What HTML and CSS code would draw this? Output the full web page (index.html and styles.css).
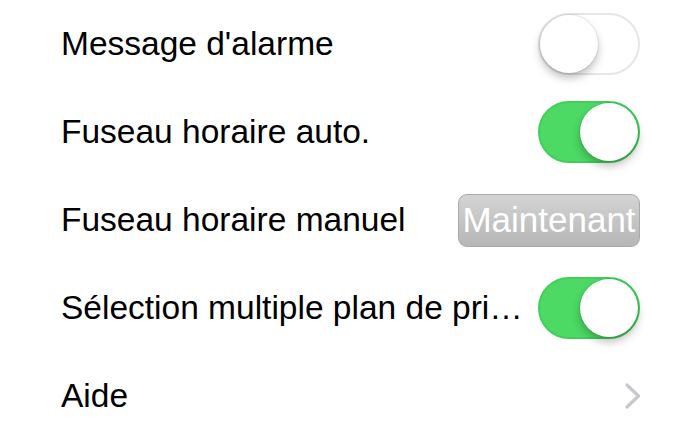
FILE: index.html
```html
<!DOCTYPE html>
<html lang="fr">
<head>
<meta charset="utf-8">
<link rel="stylesheet" href="styles.css">
</head>
<body>
<div class="list">
  <div class="row">
    <span class="label">Message d'alarme</span>
    <span class="toggle"><span class="knob"></span></span>
  </div>
  <div class="row">
    <span class="label">Fuseau horaire auto.</span>
    <span class="toggle on"><span class="knob"></span></span>
  </div>
  <div class="row">
    <span class="label">Fuseau horaire manuel</span>
    <span class="button">Maintenant</span>
  </div>
  <div class="row">
    <span class="label">Sélection multiple plan de pri…</span>
    <span class="toggle on"><span class="knob"></span></span>
  </div>
  <div class="row">
    <span class="label">Aide</span>
    <svg class="chevron" width="16" height="26" viewBox="0 0 16 26"><polyline points="2,2 13.5,13 2,24" fill="none" stroke="#c7c7cc" stroke-width="3.2" stroke-linecap="round" stroke-linejoin="round"/></svg>
  </div>
</div>
</body>
</html>
```
FILE: styles.css
```css
html, body {
  margin: 0;
  padding: 0;
  background: #fff;
}
body {
  font-family: "Liberation Sans", Arial, Helvetica, sans-serif;
  color: #000;
}
.list {
  display: flex;
  flex-direction: column;
}
.row {
  height: 88px;
  display: flex;
  align-items: center;
  justify-content: space-between;
  gap: 14px;
  padding: 0 60px 0 61px;
}
.label {
  font-size: 33.5px;
  white-space: nowrap;
  overflow: hidden;
  text-overflow: ellipsis;
  min-width: 0;
}
.toggle {
  flex: none;
  position: relative;
  width: 102px;
  height: 62px;
  box-sizing: border-box;
  border-radius: 31px;
  border: 2px solid #e6e6e6;
  background: #fff;
}
.toggle .knob {
  position: absolute;
  top: 0;
  left: 0;
  width: 58px;
  height: 58px;
  border-radius: 50%;
  background: #fff;
  box-shadow: 0 0 0 1px rgba(0,0,0,0.06), 0 5px 8px rgba(0,0,0,0.25);
}
.toggle.on {
  background: #4cd964;
  border-color: #40cf59;
}
.toggle.on .knob {
  left: 40px;
  box-shadow: 0 0 0 1px rgba(0,0,0,0.06), 0 5px 8px rgba(0,0,0,0.25);
}
.button {
  flex: none;
  width: 182px;
  height: 53px;
  box-sizing: border-box;
  border: 1px solid #a9a9a9;
  border-radius: 9px;
  background: linear-gradient(#d4d4d4, #b6b6b6);
  color: #fff;
  font-size: 35px;
  display: flex;
  align-items: center;
  justify-content: center;
  white-space: nowrap;
  letter-spacing: 0;
}
.chevron {
  flex: none;
  margin-right: -1px;
}
```
